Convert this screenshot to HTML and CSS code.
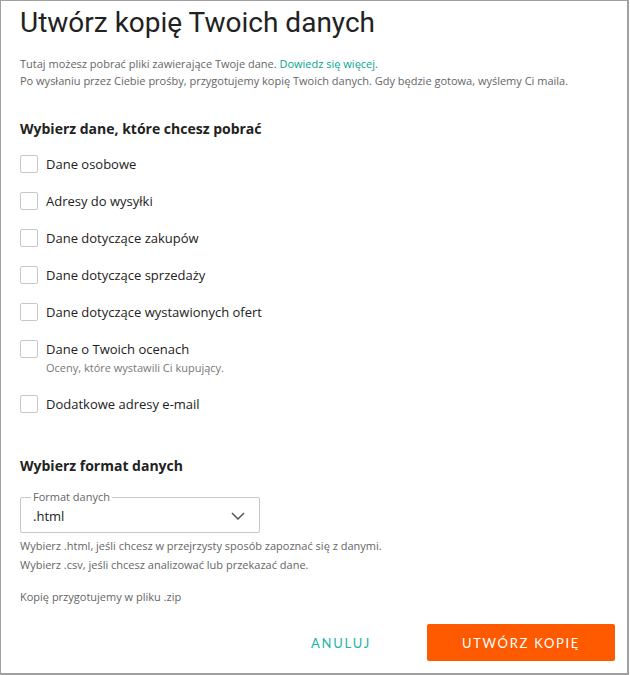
FILE: index.html
```html
<!DOCTYPE html>
<html lang="pl">
<head>
<meta charset="utf-8">
<link rel="stylesheet" href="styles.css">
</head>
<body>
<div class="dialog">
  <h1 class="title">Utwórz kopię Twoich danych</h1>
  <div class="intro">
    <p>Tutaj możesz pobrać pliki zawierające Twoje dane. <a class="link" href="#">Dowiedz się więcej</a>.</p>
    <p>Po wysłaniu przez Ciebie prośby, przygotujemy kopię Twoich danych. Gdy będzie gotowa, wyślemy Ci maila.</p>
  </div>
  <h2 class="section">Wybierz dane, które chcesz pobrać</h2>
  <ul class="checks">
    <li class="check"><span class="box"></span><span class="label">Dane osobowe</span></li>
    <li class="check"><span class="box"></span><span class="label">Adresy do wysyłki</span></li>
    <li class="check"><span class="box"></span><span class="label">Dane dotyczące zakupów</span></li>
    <li class="check"><span class="box"></span><span class="label">Dane dotyczące sprzedaży</span></li>
    <li class="check"><span class="box"></span><span class="label">Dane dotyczące wystawionych ofert</span></li>
    <li class="check"><span class="box"></span><span class="labelwrap"><span class="label">Dane o Twoich ocenach</span><span class="sub">Oceny, które wystawili Ci kupujący.</span></span></li>
    <li class="check"><span class="box"></span><span class="label">Dodatkowe adresy e-mail</span></li>
  </ul>
  <h2 class="section section2">Wybierz format danych</h2>
  <div class="select">
    <span class="legend">Format danych</span>
    <span class="value">.html</span>
    <svg class="chev" width="14" height="8" viewBox="0 0 14 8"><path d="M1 1 L7 7 L13 1" fill="none" stroke="#555" stroke-width="1.5"/></svg>
  </div>
  <div class="help">
    <p>Wybierz .html, jeśli chcesz w przejrzysty sposób zapoznać się z danymi.</p>
    <p>Wybierz .csv, jeśli chcesz analizować lub przekazać dane.</p>
  </div>
  <p class="zip">Kopię przygotujemy w pliku .zip</p>
  <div class="actions">
    <button class="btn-cancel">ANULUJ</button>
    <button class="btn-primary">UTWÓRZ KOPIĘ</button>
  </div>
</div>
</body>
</html>
```
FILE: styles.css
```css
html, body { margin: 0; padding: 0; background: #fff; }
body { font-family: "Open Sans", "Liberation Sans", sans-serif; color: #222; }
.dialog {
  box-sizing: border-box;
  width: 629px;
  height: 675px;
  border: 1px solid #a0a0a0;
  border-right-width: 2px;
  border-bottom-width: 2px;
  padding: 0 12px 0 19px;
  display: flex;
  flex-direction: column;
}
.title {
  font-family: Roboto, "Liberation Sans", sans-serif;
  font-weight: 400;
  font-size: 28px;
  line-height: 32px;
  margin: 6px 0 0 0;
  color: #222;
}
.intro { margin-top: 16px; }
.intro p { margin: 0; font-size: 11px; line-height: 17px; color: #666; }
.link { color: #00a790; text-decoration: none; }
.section {
  font-size: 14px;
  font-weight: 700;
  line-height: 20px;
  margin: 30px 0 0 0;
  color: #222;
}
.section2 { margin-top: 43px; }
.checks { list-style: none; margin: 16px 0 0 0; padding: 0; display: flex; flex-direction: column; gap: 19px; }
.check { display: flex; align-items: flex-start; gap: 8px; }
.box {
  box-sizing: border-box;
  width: 18px; height: 18px;
  border: 1px solid #c8c8c8;
  border-radius: 2px;
  flex: none;
}
.label { font-size: 13px; line-height: 18px; color: #222; }
.labelwrap { display: flex; flex-direction: column; }
.sub { font-size: 11px; line-height: 17px; color: #777; margin-top: 1px; }
.select {
  box-sizing: border-box;
  width: 240px;
  height: 36px;
  margin: 21px 0 0 0;
  padding: 2px 14px 0 12px;
  border: 1px solid #c8c8c8;
  border-radius: 2px;
  display: flex;
  align-items: center;
  justify-content: space-between;
  position: relative;
}
.legend {
  position: absolute;
  left: 10px;
  top: -8px;
  font-size: 11px;
  line-height: 14px;
  color: #666;
  padding: 0 2px;
  background: #fff;
}
.value { font-size: 13px; line-height: 18px; color: #222; }
.chev { display: block; }
.help { margin-top: 3px; }
.help p { margin: 0; font-size: 11px; line-height: 19px; color: #666; }
.zip { margin: 14px 0 0 0; font-size: 11px; line-height: 18px; color: #666; }
.actions { margin-top: auto; margin-bottom: 12px; display: flex; justify-content: flex-end; align-items: center; gap: 56px; }
.btn-cancel {
  background: none; border: 0; padding: 0;
  font-family: Lato, "Open Sans", sans-serif;
  font-size: 13px; letter-spacing: 1.8px; color: #1bb5a8;
}
.btn-primary {
  width: 188px; height: 37px;
  background: #ff5a00; border: 0; border-radius: 2px;
  color: #fff;
  font-family: Lato, "Open Sans", sans-serif;
  font-size: 13px; letter-spacing: 1.7px;
}
```
